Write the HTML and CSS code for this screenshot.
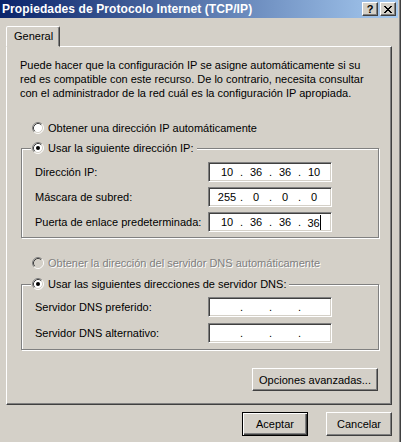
FILE: index.html
```html
<!DOCTYPE html>
<html lang="es">
<head>
    <meta charset="UTF-8">
    <meta name="viewport" content="width=device-width, initial-scale=1.0">
    <title>Propiedades de Protocolo Internet (TCP/IP)</title>
    <link rel="stylesheet" href="styles.css">
</head>
<body>

<svg class="defs" width="0" height="0">
    <symbol id="radio" viewBox="0 0 12 12">
        <circle cx="6" cy="6" r="5" fill="#fff"/>
        <path d="M2.11 9.89 A5.5 5.5 0 0 1 9.89 2.11" stroke="#808080" fill="none"/>
        <path d="M9.89 2.11 A5.5 5.5 0 0 1 2.11 9.89" stroke="#fff" fill="none"/>
        <path d="M2.82 9.18 A4.5 4.5 0 0 1 9.18 2.82" stroke="#404040" fill="none"/>
        <path d="M9.18 2.82 A4.5 4.5 0 0 1 2.82 9.18" stroke="#d4d0c8" fill="none"/>
    </symbol>
    <symbol id="radio-off" viewBox="0 0 12 12">
        <circle cx="6" cy="6" r="5" fill="#d4d0c8"/>
        <path d="M2.11 9.89 A5.5 5.5 0 0 1 9.89 2.11" stroke="#808080" fill="none"/>
        <path d="M9.89 2.11 A5.5 5.5 0 0 1 2.11 9.89" stroke="#fff" fill="none"/>
        <path d="M2.82 9.18 A4.5 4.5 0 0 1 9.18 2.82" stroke="#404040" fill="none"/>
        <path d="M9.18 2.82 A4.5 4.5 0 0 1 2.82 9.18" stroke="#d4d0c8" fill="none"/>
    </symbol>
</svg>

<div class="window">
    <div class="titlebar">
        <span class="title">Propiedades de Protocolo Internet (TCP/IP)</span>
        <div class="caption-buttons">
            <span class="cap-btn help">?</span>
            <span class="cap-btn">
                <svg width="8" height="7" viewBox="0 0 8 7">
                    <path d="M0 0h2v1h-2zM6 0h2v1h-2zM1 1h2v1h-2zM5 1h2v1h-2zM2 2h4v1h-4zM3 3h2v1h-2zM2 4h4v1h-4zM1 5h2v1h-2zM5 5h2v1h-2zM0 6h2v1h-2zM6 6h2v1h-2z" fill="#000"/>
                </svg>
            </span>
        </div>
    </div>

    <div class="tabs">
        <div class="tab">General</div>
    </div>

    <div class="panel">
        <p class="intro">Puede hacer que la configuración IP se asigne automáticamente si su<br>red es compatible con este recurso. De lo contrario, necesita consultar<br>con el administrador de la red cuál es la configuración IP apropiada.</p>

        <div class="radio-row">
            <svg class="radio" width="12" height="12"><use href="#radio"/></svg>
            <span>Obtener una dirección IP automáticamente</span>
        </div>

        <div class="group">
            <div class="legend">
                <svg class="radio" width="12" height="12"><use href="#radio"/><circle cx="6" cy="6" r="2" fill="#000"/></svg>
                <span>Usar la siguiente dirección IP:</span>
            </div>
            <div class="rows">
                <div class="field-row">
                    <span>Dirección IP:</span>
                    <div class="ipbox"><span class="oct">10</span><span class="dot">.</span><span class="oct">36</span><span class="dot">.</span><span class="oct">36</span><span class="dot">.</span><span class="oct">10</span></div>
                </div>
                <div class="field-row">
                    <span>Máscara de subred:</span>
                    <div class="ipbox"><span class="oct">255</span><span class="dot">.</span><span class="oct">0</span><span class="dot">.</span><span class="oct">0</span><span class="dot">.</span><span class="oct">0</span></div>
                </div>
                <div class="field-row">
                    <span>Puerta de enlace predeterminada:</span>
                    <div class="ipbox"><span class="oct">10</span><span class="dot">.</span><span class="oct">36</span><span class="dot">.</span><span class="oct">36</span><span class="dot">.</span><span class="oct">36<i class="caret"></i></span></div>
                </div>
            </div>
        </div>

        <div class="radio-row disabled">
            <svg class="radio" width="12" height="12"><use href="#radio-off"/></svg>
            <span>Obtener la dirección del servidor DNS automáticamente</span>
        </div>

        <div class="group dns">
            <div class="legend">
                <svg class="radio" width="12" height="12"><use href="#radio"/><circle cx="6" cy="6" r="2" fill="#000"/></svg>
                <span>Usar las siguientes direcciones de servidor DNS:</span>
            </div>
            <div class="rows">
                <div class="field-row">
                    <span>Servidor DNS preferido:</span>
                    <div class="ipbox"><span class="oct"></span><span class="dot">.</span><span class="oct"></span><span class="dot">.</span><span class="oct"></span><span class="dot">.</span><span class="oct"></span></div>
                </div>
                <div class="field-row">
                    <span>Servidor DNS alternativo:</span>
                    <div class="ipbox"><span class="oct"></span><span class="dot">.</span><span class="oct"></span><span class="dot">.</span><span class="oct"></span><span class="dot">.</span><span class="oct"></span></div>
                </div>
            </div>
        </div>

        <div class="panel-actions">
            <button class="btn wide">Opciones avanzadas...</button>
        </div>
    </div>

    <div class="dialog-buttons">
        <button class="btn default">Aceptar</button>
        <button class="btn">Cancelar</button>
    </div>
</div>

</body>
</html>
```

FILE: styles.css
```css
body {
    margin: 0;
    padding: 0;
    background-color: #d4d0c8;
    font-family: "Liberation Sans", Arial, sans-serif;
    font-size: 11px;
    color: #000;
    overflow: hidden;
}

.defs {
    position: absolute;
}

.window {
    width: 401px;
    height: 442px;
    box-sizing: border-box;
    border-right: 1px solid #404040;
    box-shadow: inset -1px 0 0 #808080;
    padding-right: 2px;
}

.titlebar {
    height: 18px;
    display: flex;
    align-items: center;
    justify-content: space-between;
    padding: 0 2px;
    background: linear-gradient(to right, #0a246a, #a6caf0);
}

.title {
    color: #fff;
    font-weight: bold;
    font-size: 12px;
    letter-spacing: 0.1px;
}

.caption-buttons {
    display: flex;
    gap: 2px;
}

.cap-btn {
    width: 16px;
    height: 14px;
    box-sizing: border-box;
    display: flex;
    align-items: center;
    justify-content: center;
    background-color: #d4d0c8;
    border: 1px solid;
    border-color: #fff #404040 #404040 #fff;
    box-shadow: inset -1px -1px 0 #808080;
}

.help {
    font-weight: bold;
    font-size: 11px;
    line-height: 12px;
}

.tabs {
    display: flex;
    margin-top: 8px;
    padding-left: 6px;
}

.tab {
    position: relative;
    z-index: 1;
    height: 21px;
    box-sizing: border-box;
    margin-bottom: -1px;
    padding: 3px 6px 0 7px;
    background-color: #d4d0c8;
    border: 1px solid;
    border-color: #fff #404040 transparent #fff;
    border-top-left-radius: 2px;
    border-top-right-radius: 2px;
    box-shadow: inset -1px 0 0 #808080;
}

.panel {
    margin-left: 6px;
    width: 386px;
    height: 359px;
    box-sizing: border-box;
    border: 1px solid;
    border-color: #fff #404040 #404040 #fff;
    box-shadow: inset -1px -1px 0 #808080;
    padding: 11px 12px 0 13px;
}

.intro {
    margin: 0;
    line-height: 14px;
}

.radio-row {
    display: flex;
    align-items: center;
    height: 16px;
    margin: 20px 0 0 12px;
}

.radio {
    flex: none;
    margin-right: 4px;
}

.radio-row.disabled {
    margin-top: 17px;
    color: #808080;
    text-shadow: 1px 1px 0 #fff;
}

.group {
    margin: 12px 0 0 1px;
    border: 1px solid #808080;
    box-shadow: 1px 1px 0 #fff, inset 1px 1px 0 #fff;
    padding: 0 12px 5px 13px;
}

.group.dns {
    margin-top: 13px;
    padding-bottom: 6px;
}

.legend {
    display: flex;
    align-items: center;
    width: fit-content;
    height: 16px;
    margin: -9px 0 0 -4px;
    padding: 0 3px 0 1px;
    background-color: #d4d0c8;
}

.rows {
    display: flex;
    flex-direction: column;
    gap: 5px;
    margin-top: 6px;
}

.dns .rows {
    gap: 6px;
    margin-top: 5px;
}

.field-row {
    display: grid;
    grid-template-columns: 173px 124px;
    align-items: center;
}

.ipbox {
    height: 20px;
    box-sizing: border-box;
    display: flex;
    align-items: center;
    padding-left: 6px;
    background-color: #fff;
    border: 1px solid;
    border-color: #808080 #fff #fff #808080;
    box-shadow: inset 1px 1px 0 #404040, inset -1px -1px 0 #d4d0c8;
}

.oct {
    width: 24px;
    text-align: center;
}

.dot {
    width: 5px;
    text-align: center;
}

.caret {
    display: inline-block;
    width: 1px;
    height: 15px;
    background-color: #000;
    vertical-align: -3px;
}

.panel-actions {
    display: flex;
    justify-content: flex-end;
    margin-top: 18px;
    padding-right: 1px;
}

.btn {
    font-family: inherit;
    font-size: 11px;
    color: #000;
    height: 24px;
    width: 66px;
    padding: 0;
    box-sizing: border-box;
    background-color: #d4d0c8;
    border: 1px solid;
    border-color: #fff #404040 #404040 #fff;
    box-shadow: inset -1px -1px 0 #808080;
    border-radius: 0;
}

.btn.wide {
    width: 126px;
    height: 23px;
}

.btn.default {
    border: 1px solid #000;
    box-shadow: inset 1px 1px 0 #fff, inset -1px -1px 0 #404040, inset -2px -2px 0 #808080;
}

.dialog-buttons {
    display: flex;
    justify-content: flex-end;
    gap: 18px;
    width: 392px;
    margin-top: 7px;
}
```
